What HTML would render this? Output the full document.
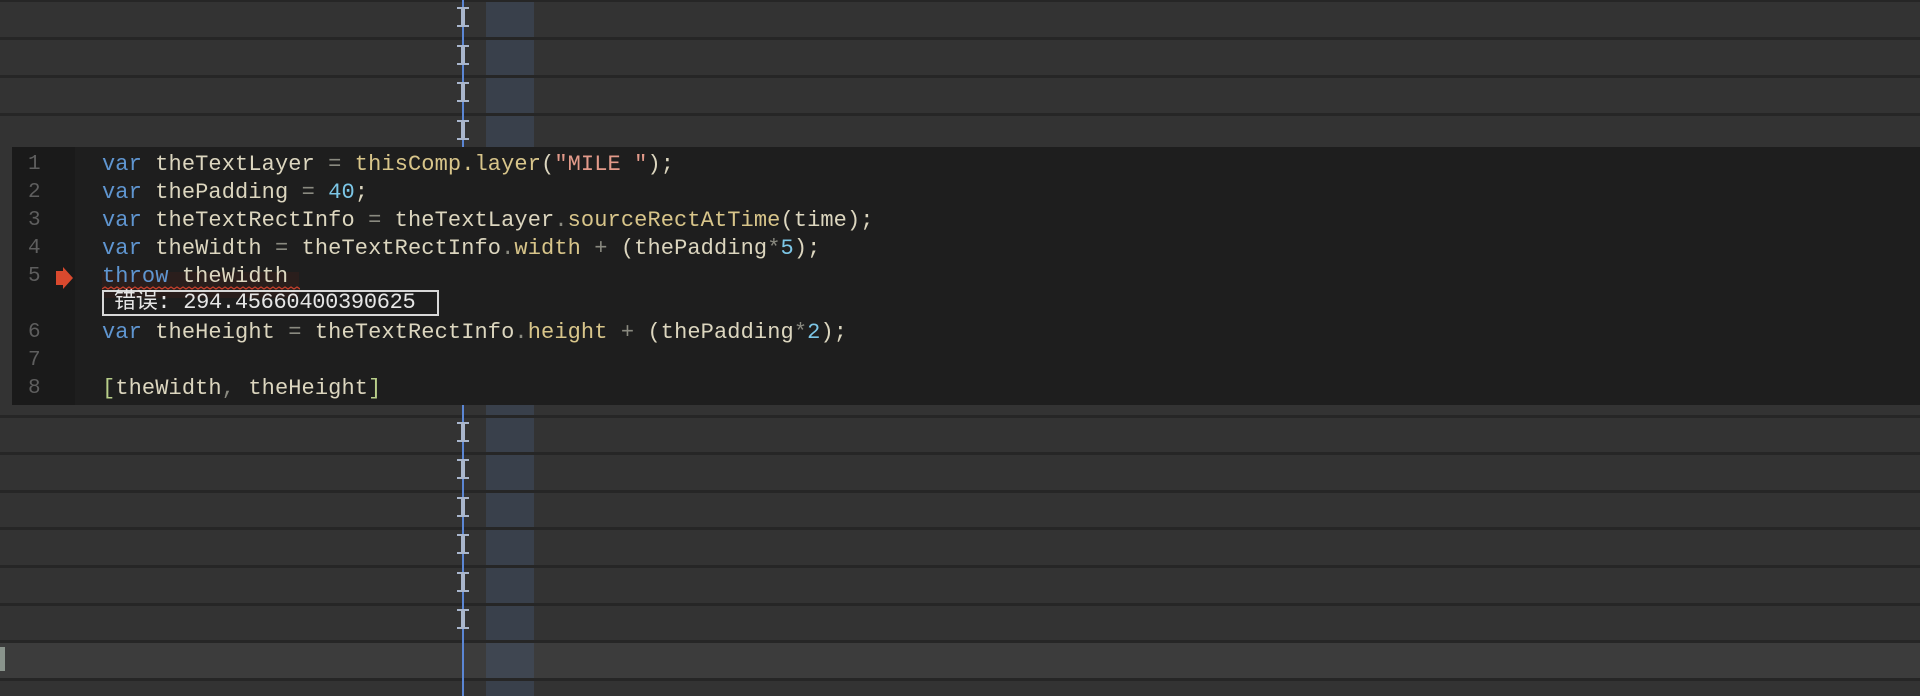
<!DOCTYPE html>
<html><head><meta charset="utf-8"><style>
html,body{margin:0;padding:0;}
body{width:1920px;height:696px;background:#333;position:relative;overflow:hidden;font-family:"Liberation Mono","Noto Sans CJK SC",monospace;}
.sep{position:absolute;left:0;width:1920px;height:3px;background:#262626;}
.band{position:absolute;left:486px;width:48px;top:0;height:696px;background:rgba(70,90,120,0.35);}
.vline{position:absolute;left:462px;width:2px;top:0;height:696px;background:#5b86d4;}
.ib{position:absolute;left:457px;width:12px;height:20px;}
.ib:before{content:"";position:absolute;left:4px;top:0;width:4px;height:20px;background:#a9b6cc;}
.ib:after{content:"";position:absolute;left:0;top:0;width:12px;height:20px;border-top:2px solid #a9b6cc;border-bottom:2px solid #a9b6cc;box-sizing:border-box;}
.lite{position:absolute;left:0;top:641px;width:1920px;height:37px;background:#3c3c3c;}
#ed{position:absolute;left:12px;top:147px;width:1908px;height:258px;background:#1e1e1e;}
#gut{position:absolute;left:0;top:0;width:63px;height:258px;background:#1a1a1a;}
.ln{position:absolute;left:16px;width:30px;font-size:21px;color:#5e5e5e;height:28px;line-height:28px;}
.cl{position:absolute;left:90px;font-size:22px;white-space:pre;height:28px;line-height:28px;color:#dcd6bf;letter-spacing:0.1px;}
.k{color:#5f95d0}.o{color:#8a8a80}.m{color:#d8c58a}.s{color:#e39a8a}.n{color:#7cc6e6}.b{color:#b9cf8a}
</style></head><body>
<div class="lite"></div>
<div class="band"></div>
<div class="sep" style="top:0;height:2px"></div>
<div class="sep" style="top:37px"></div>
<div class="sep" style="top:75px"></div>
<div class="sep" style="top:113px"></div>
<div class="sep" style="top:415px"></div>
<div class="sep" style="top:452px"></div>
<div class="sep" style="top:490px"></div>
<div class="sep" style="top:527px"></div>
<div class="sep" style="top:565px"></div>
<div class="sep" style="top:603px"></div>
<div class="sep" style="top:640px"></div>
<div class="sep" style="top:678px"></div>
<div class="vline"></div>
<div class="ib" style="top:7px"></div>
<div class="ib" style="top:45px"></div>
<div class="ib" style="top:82px"></div>
<div class="ib" style="top:120px"></div>
<div class="ib" style="top:422px"></div>
<div class="ib" style="top:459px"></div>
<div class="ib" style="top:497px"></div>
<div class="ib" style="top:534px"></div>
<div class="ib" style="top:572px"></div>
<div class="ib" style="top:609px"></div>
<div style="position:absolute;left:0;top:647px;width:5px;height:24px;background:#8a948c"></div>
<div id="ed">
<div id="gut"></div>
<div style="position:absolute;left:90px;top:125px;width:197px;height:26px;background:#2a1e1c"></div>
<div class="ln" style="top:4px">1</div>
<div class="ln" style="top:32px">2</div>
<div class="ln" style="top:60px">3</div>
<div class="ln" style="top:88px">4</div>
<div class="ln" style="top:116px">5</div>
<div class="ln" style="top:172px">6</div>
<div class="ln" style="top:200px">7</div>
<div class="ln" style="top:228px">8</div>
<svg style="position:absolute;left:41px;top:119px" width="22" height="24" viewBox="0 0 22 24"><path d="M3 5 H10 V1 L20 12 L10 23 V19 H3 Z" fill="#d9492e"/></svg>
<div class="cl" style="top:4px"><span class="k">var</span> theTextLayer <span class="o">=</span> <span class="m">thisComp.layer</span>(<span class="s">"MILE "</span>);</div>
<div class="cl" style="top:32px"><span class="k">var</span> thePadding <span class="o">=</span> <span class="n">40</span>;</div>
<div class="cl" style="top:60px"><span class="k">var</span> theTextRectInfo <span class="o">=</span> theTextLayer<span class="o">.</span><span class="m">sourceRectAtTime</span>(time);</div>
<div class="cl" style="top:88px"><span class="k">var</span> theWidth <span class="o">=</span> theTextRectInfo<span class="o">.</span><span class="m">width</span> <span class="o">+</span> (thePadding<span class="o">*</span><span class="n">5</span>);</div>
<div class="cl" style="top:116px"><span class="k">throw</span> theWidth</div>
<svg style="position:absolute;left:90px;top:139px" width="198" height="5" viewBox="0 0 198 5"><path d="M0 3 l3 -2 l3 2 l3 -2 l3 2 l3 -2 l3 2 l3 -2 l3 2 l3 -2 l3 2 l3 -2 l3 2 l3 -2 l3 2 l3 -2 l3 2 l3 -2 l3 2 l3 -2 l3 2 l3 -2 l3 2 l3 -2 l3 2 l3 -2 l3 2 l3 -2 l3 2 l3 -2 l3 2 l3 -2 l3 2 l3 -2 l3 2 l3 -2 l3 2 l3 -2 l3 2 l3 -2 l3 2 l3 -2 l3 2 l3 -2 l3 2 l3 -2 l3 2 l3 -2 l3 2 l3 -2 l3 2 l3 -2 l3 2 l3 -2 l3 2 l3 -2 l3 2 l3 -2 l3 2 l3 -2 l3 2 l3 -2 l3 2 l3 -2 l3 2 l3 -2 l3 2 l3 -2 l3 2" stroke="#c8402c" stroke-width="1.2" fill="none"/></svg>
<div style="position:absolute;left:90px;top:143px;width:337px;height:26px;border:2px solid #d8d8d8;box-sizing:border-box;color:#e6e6e6;font-size:22px;line-height:22px;padding-left:10px;white-space:pre;letter-spacing:-0.3px">错误: 294.45660400390625</div>
<div class="cl" style="top:172px"><span class="k">var</span> theHeight <span class="o">=</span> theTextRectInfo<span class="o">.</span><span class="m">height</span> <span class="o">+</span> (thePadding<span class="o">*</span><span class="n">2</span>);</div>
<div class="cl" style="top:228px"><span class="b">[</span>theWidth<span class="o">,</span> theHeight<span class="b">]</span></div>
</div>
</body></html>
